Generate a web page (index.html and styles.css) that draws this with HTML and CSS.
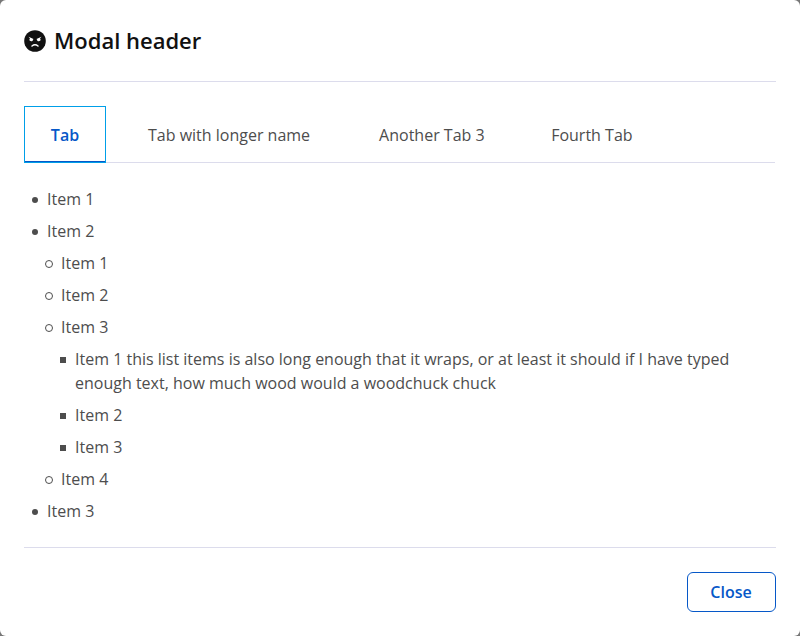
FILE: index.html
```html
<!DOCTYPE html>
<html lang="en">
<head>
<meta charset="utf-8">
<title>Modal header</title>
<link rel="stylesheet" href="styles.css">
</head>
<body>
<section class="modal" role="dialog" aria-labelledby="title">
  <header class="modal-header">
    <svg class="icon" viewBox="0 0 22 22" aria-hidden="true">
      <circle cx="11" cy="11" r="10.8" fill="#111"/>
      <path d="M4.5 6.8 L9.5 9 L9 9.7 A1.7 1.7 0 1 1 6 8.4 Z M17.5 6.8 L12.5 9 L13 9.7 A1.7 1.7 0 1 0 16 8.4 Z" fill="#fff"/>
      <path d="M8 16 Q11 13.6 14 16" fill="none" stroke="#fff" stroke-width="1.5" stroke-linecap="round"/>
    </svg>
    <h1 class="title" id="title">Modal header</h1>
  </header>
  <div class="modal-body">
    <nav class="tabs">
      <button class="tab tab-active">Tab</button>
      <button class="tab tab-second">Tab with longer name</button>
      <button class="tab tab-third">Another Tab 3</button>
      <button class="tab tab-fourth">Fourth Tab</button>
    </nav>
    <ul class="list">
      <li class="disc">Item 1</li>
      <li class="disc">Item 2
        <ul>
          <li class="ring">Item 1</li>
          <li class="ring">Item 2</li>
          <li class="ring">Item 3
            <ul>
              <li class="square">Item 1 this list items is also long enough that it wraps, or at least it should if I have typed enough text, how much wood would a woodchuck chuck</li>
              <li class="square">Item 2</li>
              <li class="square">Item 3</li>
            </ul>
          </li>
          <li class="ring">Item 4</li>
        </ul>
      </li>
      <li class="disc">Item 3</li>
    </ul>
  </div>
  <footer class="modal-footer"><button class="close">Close</button></footer>
</section>
</body>
</html>
```
FILE: styles.css
```css
*, *::before { box-sizing: border-box; }
body { margin: 0; background: #777; font: 16px/24px "Open Sans", sans-serif; color: #4d4d4d; }
.modal { height: 636px; padding: 0 24px; background: #fff; border-radius: 6px; display: flex; flex-direction: column; }
.modal-header { height: 82px; border-bottom: 1px solid #dcdcec; display: flex; align-items: center; gap: 8px; }
.icon { width: 22px; height: 22px; }
.title { margin: 0; padding-bottom: 2px; font-size: 22px; line-height: 32px; font-weight: 600; color: #111; }
.modal-body { flex: 1; padding-top: 24px; }
button { font: inherit; background: none; }
.tabs { display: flex; height: 57px; border-bottom: 1px solid #dcdcec; margin-right: 1px; }
.tab { height: 57px; padding: 0 16px; border: 0; color: #4d4d4d; white-space: nowrap; }
.tab-active { width: 82px; border: 1px solid #009fe8; box-shadow: inset 0 -1px #0658c8; color: #0658c8; font-weight: 600; padding-top: 1px; }
.tab-second { margin-left: 26px; }
.tab-third { margin-left: 37px; }
.tab-fourth { margin-left: 34.5px; }
ul { list-style: none; margin: 0; padding: 0; }
.list { padding: 24px 9px 0; }
li { position: relative; padding-left: 14px; margin-bottom: 8px; }
li ul { padding-top: 8px; }
li li:last-child { margin-bottom: 0; }
li::before { content: ""; position: absolute; left: -1px; top: 10px; width: 6px; height: 6px; }
.disc::before { background: #4d4d4d; border-radius: 50%; }
.ring::before { left: -2px; top: 9px; width: 8px; height: 8px; border: 1px solid #4d4d4d; border-radius: 50%; }
.square::before { background: #4d4d4d; }
.modal-footer { height: 89px; border-top: 1px solid #dcdcec; padding-top: 24px; display: flex; justify-content: flex-end; }
.close { width: 89px; height: 40px; padding: 0 7px 0 6px; border: 1px solid #0658c8; border-radius: 6px; color: #0658c8; font-weight: 600; }
```
